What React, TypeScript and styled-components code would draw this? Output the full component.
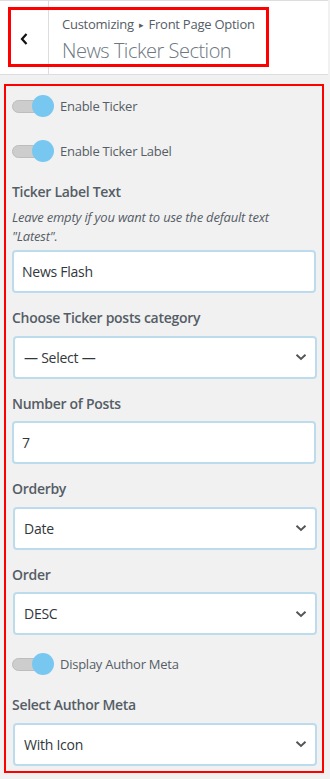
import styled, { createGlobalStyle } from "styled-components";

const GlobalStyle = createGlobalStyle`
  html, body {
    margin: 0;
    padding: 0;
    background: #f1f1f1;
    font-family: "Open Sans", "Noto Sans", sans-serif;
    color: #555d66;
  }
  * {
    box-sizing: border-box;
  }
`;

const Page = styled.div`
  width: 330px;
  min-height: 779px;
  background: #f1f1f1;
`;

const Header = styled.div`
  position: relative;
  display: flex;
  height: 75px;
  margin-right: 2px;
  background: #fff;
  border-top: 1px solid #ddd;
  border-bottom: 1px solid #ddd;
`;

const BackButton = styled.button`
  width: 49px;
  flex-shrink: 0;
  display: flex;
  align-items: center;
  justify-content: center;
  padding: 2px 0 0;
  background: transparent;
  border: none;
  border-right: 1px solid #ddd;
  cursor: pointer;
`;

const TitleBlock = styled.div`
  display: flex;
  flex-direction: column;
  justify-content: center;
  padding: 0 0 0 13px;
`;

const Breadcrumb = styled.span`
  font-size: 13px;
  line-height: 24px;
  letter-spacing: -0.25px;
  color: #555d66;
`;

const Arrow = styled.span`
  font-size: 9px;
  margin: 0 5px;
  position: relative;
  top: -1px;
`;

const SectionTitle = styled.h3`
  margin: 0;
  font-size: 20px;
  font-weight: 300;
  line-height: 26px;
  letter-spacing: -0.5px;
  color: #6c7781;
`;

/* annotation frame drawn over the header */
const HeaderMark = styled.div`
  position: absolute;
  left: 8px;
  top: 6px;
  width: 261px;
  height: 60px;
  border: 3px solid #ff0000;
  pointer-events: none;
`;

const Panel = styled.div`
  margin: 9px 6px 0 4px;
  padding: 6px 6px 5px 6px;
  border: 2px solid #ff0000;
`;

const ToggleRow = styled.label`
  display: flex;
  align-items: center;
  padding: 3px 0;
  margin-bottom: 17px;
  font-size: 13px;
  line-height: 22px;
  letter-spacing: -0.25px;
  color: #555d66;
`;

const Switch = styled.span`
  position: relative;
  width: 42px;
  height: 22px;
  margin-right: 6px;
  flex-shrink: 0;
`;

const Track = styled.span`
  position: absolute;
  left: 0;
  top: 5px;
  width: 38px;
  height: 13px;
  border-radius: 7px;
  background: #cdcdcd;
  border: 1px solid #bdbdbd;
`;

const Knob = styled.span`
  position: absolute;
  right: 0;
  top: 0;
  width: 22px;
  height: 22px;
  border-radius: 50%;
  background: #78c7f0;
`;

const Field = styled.div`
  margin-bottom: 15px;

  &:last-child {
    margin-bottom: 0;
  }
`;

const Label = styled.div`
  font-size: 14px;
  font-weight: 600;
  line-height: 20px;
  letter-spacing: -0.3px;
  margin-bottom: 7.5px;
  color: #555d66;
`;

const Description = styled.div`
  margin: -2px 0 4.5px;
  font-size: 13px;
  font-style: italic;
  line-height: 19px;
  letter-spacing: -0.2px;
  color: #555d66;
`;

const TextInput = styled.input`
  display: block;
  width: 304px;
  height: 43px;
  padding: 0 8px;
  border: 2px solid #bcdcee;
  border-radius: 4px;
  background: #fff;
  font-family: "Open Sans", "Noto Sans", sans-serif;
  font-size: 14px;
  letter-spacing: -0.25px;
  color: #32373c;
  outline: none;
`;

const SelectBox = styled.div`
  display: flex;
  align-items: center;
  justify-content: space-between;
  width: 304px;
  height: 43px;
  margin-left: 1px;
  padding: 0 8px 0 9px;
  border: 2px solid #bcdcee;
  border-radius: 4px;
  background: #fff;
  font-size: 14px;
  letter-spacing: -0.25px;
  color: #32373c;
`;

const Chevron = () => (
  <svg width="12" height="8" viewBox="0 0 12 8" fill="none">
    <path d="M1.5 1.8 6 6 10.5 1.8" stroke="#555" strokeWidth="2" />
  </svg>
);

const BackIcon = () => (
  <svg width="10" height="14" viewBox="0 0 10 14" fill="none">
    <path d="M7.5 2 3 7l4.5 5" stroke="#111" strokeWidth="2.2" />
  </svg>
);

const Toggle = ({ text }: { text: string }) => (
  <ToggleRow>
    <Switch>
      <Track />
      <Knob />
    </Switch>
    {text}
  </ToggleRow>
);

const Select = ({ label, value }: { label: string; value: string }) => (
  <Field>
    <Label>{label}</Label>
    <SelectBox>
      <span>{value}</span>
      <Chevron />
    </SelectBox>
  </Field>
);

export default function App() {
  return (
    <Page>
      <GlobalStyle />
      <Header>
        <BackButton aria-label="Back">
          <BackIcon />
        </BackButton>
        <TitleBlock>
          <Breadcrumb>
            Customizing<Arrow>▸</Arrow>Front Page Option
          </Breadcrumb>
          <SectionTitle>News Ticker Section</SectionTitle>
        </TitleBlock>
        <HeaderMark />
      </Header>

      <Panel>
        <Toggle text="Enable Ticker" />
        <Toggle text="Enable Ticker Label" />

        <Field>
          <Label>Ticker Label Text</Label>
          <Description>
            Leave empty if you want to use the default text "Latest".
          </Description>
          <TextInput defaultValue="News Flash" />
        </Field>

        <Select label="Choose Ticker posts category" value="— Select —" />

        <Field>
          <Label>Number of Posts</Label>
          <TextInput defaultValue="7" />
        </Field>

        <Select label="Orderby" value="Date" />
        <Select label="Order" value="DESC" />

        <Toggle text="Display Author Meta" />

        <Select label="Select Author Meta" value="With Icon" />
      </Panel>
    </Page>
  );
}
